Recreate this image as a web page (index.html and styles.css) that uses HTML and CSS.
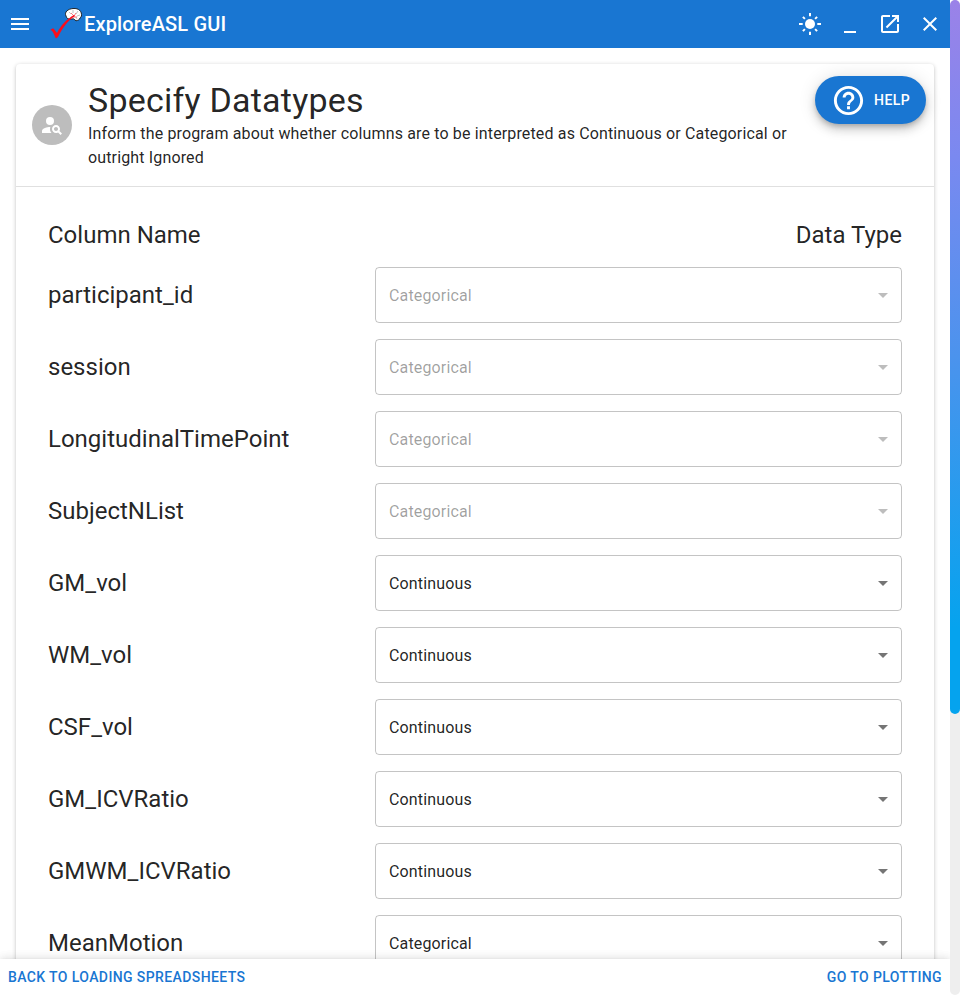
FILE: index.html
```html
<!DOCTYPE html>
<html lang="en">
<head>
<meta charset="utf-8">
<title>ExploreASL GUI</title>
<link rel="stylesheet" href="styles.css">
</head>
<body>
<div class="app">
  <header class="appbar">
    <svg class="icon" viewBox="0 0 24 24"><path d="M3 18h18v-2H3v2zm0-5h18v-2H3v2zm0-7v2h18V6H3z"/></svg>
    <svg class="logo" viewBox="0 0 36 36">
      <path d="M17 10C15 6 19 3 24 2.500c6-.5 9 3 8.500 7.500-.5 1-1 1.500-1.500 2 0 1.500-2 2.500-4 2.800l-2.500-2-2 .2c-3 .5-5-.5-5.500-3z" fill="#fff" stroke="#161616" stroke-width=".9"/>
      <path d="M20 6l2 2M24 4l0 3M29 5l-2 3M31 9l-3 1M28 13l-1-2" stroke="#aaa" stroke-width=".7" fill="none"/>
      <path d="M22 7l3 3 2-3M24 11l4 0" stroke="#f0444c" stroke-width=".7" fill="none"/>
      <path d="M1 24c2-1 3-2 4-1l3 4C12 19 18 13 25 9l1 1C18 15 13 23 9 31l-2 1.500C5 29 4 24 1 24z" fill="#fb0d1b"/>
    </svg>
    <h1 class="brand">ExploreASL GUI</h1>
    <div class="window-actions">
      <svg class="icon" viewBox="0 0 24 24"><circle cx="12" cy="12" r="5"/><path d="M12 1v3.300M12 19.700v3.300M1 12h3.700M19.300 12h3.700M4.900 4.900l2 2M17.100 17.100l2 2M4.900 19.100l2-2M17.100 6.900l2-2" stroke="currentColor" stroke-width="2"/></svg>
      <svg class="icon" viewBox="0 0 24 24"><path d="M6 19h12v2H6z"/></svg>
      <svg class="icon" viewBox="0 0 24 24"><path d="M19 19H5V5h7V3H5c-1.11 0-2 .9-2 2v14c0 1.1.89 2 2 2h14c1.1 0 2-.9 2-2v-7h-2v7zM14 3v2h3.59l-9.83 9.83 1.41 1.41L19 6.41V10h2V3h-7z"/></svg>
      <svg class="icon" viewBox="0 0 24 24"><path d="M19 6.41L17.59 5 12 10.59 6.41 5 5 6.41 10.59 12 5 17.59 6.41 19 12 13.41 17.59 19 19 17.59 13.41 12z"/></svg>
    </div>
  </header>

  <main class="content">
    <section class="card">
      <div class="card-header">
        <div class="avatar"><svg viewBox="0 0 24 24"><circle cx="10" cy="8" r="4"/><path d="M10.35 14.01C7.62 13.91 2 15.27 2 18v2h9.54c-2.47-2.76-1.23-5.89-1.19-5.99zM19.43 18.02c.36-.59.57-1.28.57-2.02 0-2.21-1.79-4-4-4s-4 1.79-4 4 1.79 4 4 4c.74 0 1.43-.22 2.02-.57L20.59 22 22 20.59l-2.57-2.57zM16 18c-1.1 0-2-.9-2-2s.9-2 2-2 2 .9 2 2-.9 2-2 2z"/></svg></div>
        <div class="heading">
          <h2 class="title">Specify Datatypes</h2>
          <p class="subtitle">Inform the program about whether columns are to be interpreted as Continuous or Categorical or outright Ignored</p>
        </div>
        <button class="help"><svg viewBox="0 0 24 24"><path d="M11 18h2v-2h-2v2zm1-16C6.48 2 2 6.48 2 12s4.48 10 10 10 10-4.48 10-10S17.52 2 12 2zm0 18c-4.41 0-8-3.59-8-8s3.59-8 8-8 8 3.59 8 8-3.59 8-8 8zm0-14c-2.21 0-4 1.79-4 4h2c0-1.1.9-2 2-2s2 .9 2 2c0 2-3 1.75-3 5h2c0-2.25 3-2.5 3-5 0-2.21-1.79-4-4-4z"/></svg>Help</button>
      </div>
      <div class="card-body">
        <div class="columns"><span>Column Name</span><span>Data Type</span></div>
        <div class="row"><span>participant_id</span><div class="select disabled"><span>Categorical</span><svg viewBox="0 0 24 24"><path d="M7 10l5 5 5-5z"/></svg></div></div>
        <div class="row"><span>session</span><div class="select disabled"><span>Categorical</span><svg viewBox="0 0 24 24"><path d="M7 10l5 5 5-5z"/></svg></div></div>
        <div class="row"><span>LongitudinalTimePoint</span><div class="select disabled"><span>Categorical</span><svg viewBox="0 0 24 24"><path d="M7 10l5 5 5-5z"/></svg></div></div>
        <div class="row"><span>SubjectNList</span><div class="select disabled"><span>Categorical</span><svg viewBox="0 0 24 24"><path d="M7 10l5 5 5-5z"/></svg></div></div>
        <div class="row"><span>GM_vol</span><div class="select"><span>Continuous</span><svg viewBox="0 0 24 24"><path d="M7 10l5 5 5-5z"/></svg></div></div>
        <div class="row"><span>WM_vol</span><div class="select"><span>Continuous</span><svg viewBox="0 0 24 24"><path d="M7 10l5 5 5-5z"/></svg></div></div>
        <div class="row"><span>CSF_vol</span><div class="select"><span>Continuous</span><svg viewBox="0 0 24 24"><path d="M7 10l5 5 5-5z"/></svg></div></div>
        <div class="row"><span>GM_ICVRatio</span><div class="select"><span>Continuous</span><svg viewBox="0 0 24 24"><path d="M7 10l5 5 5-5z"/></svg></div></div>
        <div class="row"><span>GMWM_ICVRatio</span><div class="select"><span>Continuous</span><svg viewBox="0 0 24 24"><path d="M7 10l5 5 5-5z"/></svg></div></div>
        <div class="row"><span>MeanMotion</span><div class="select"><span>Categorical</span><svg viewBox="0 0 24 24"><path d="M7 10l5 5 5-5z"/></svg></div></div>
      </div>
    </section>
  </main>

  <footer class="footer"><button>Back to Loading Spreadsheets</button><button>Go to Plotting</button></footer>
</div>
<div class="scrollbar"><div class="thumb"></div></div>
</body>
</html>
```
FILE: styles.css
```css
* { box-sizing: border-box; }
body {
  margin: 0;
  height: 995px;
  display: flex;
  overflow: hidden;
  background: #fff;
  color: rgba(0, 0, 0, 0.87);
  font: 400 16px/24px Roboto, sans-serif;
  letter-spacing: 0.009em;
}
h1, h2, p { margin: 0; }
svg { display: block; flex: none; fill: currentColor; }
button { border: 0; font: 500 14px/24px Roboto, sans-serif; letter-spacing: 0.028em; text-transform: uppercase; }

.app { width: 950px; height: 995px; display: flex; flex-direction: column; overflow: hidden; }
.appbar { height: 48px; flex: none; display: flex; align-items: center; padding: 0 8px; background: #1976d2; color: #fff; }
.icon { width: 24px; height: 24px; }
.logo { width: 36px; height: 36px; margin-left: 17px; }
.brand { margin-left: -1px; font-size: 20px; line-height: 32px; font-weight: 500; letter-spacing: 0.0075em; }
.window-actions { margin-left: auto; display: flex; gap: 16px; }

.content { flex: 1; min-height: 0; overflow: hidden; padding: 16px; }
.card { border-radius: 4px; box-shadow: 0 2px 1px -1px rgba(0,0,0,.2), 0 1px 1px rgba(0,0,0,.14), 0 1px 4px rgba(0,0,0,.22); height: 1000px; }
.card-header { display: flex; align-items: center; padding: 16px; height: 122px; }
.avatar { width: 40px; height: 40px; margin-right: 16px; flex: none; border-radius: 50%; background: #bdbdbd; color: #fff; display: flex; align-items: center; justify-content: center; }
.avatar svg { width: 24px; height: 24px; }
.heading { flex: 1; }
.title { padding-bottom: 2px; font-size: 34px; line-height: 40px; font-weight: 400; letter-spacing: 0.0065em; }
.help { align-self: flex-start; margin: -4px -8px 0 16px; height: 48px; padding: 0 16px; display: flex; align-items: center; gap: 8px; border-radius: 24px; background: #1976d2; color: #fff; box-shadow: 0 3px 5px -1px rgba(0,0,0,.2), 0 6px 10px rgba(0,0,0,.14), 0 1px 18px rgba(0,0,0,.12); }
.help svg { width: 35px; height: 35px; }

.card-body { border-top: 1px solid rgba(0, 0, 0, .12); padding: 32px; display: flex; flex-direction: column; gap: 16px; font-size: 24px; line-height: 32px; letter-spacing: 0; }
.columns { display: flex; justify-content: space-between; }
.row { display: flex; justify-content: space-between; align-items: center; }
.select { width: 527px; height: 56px; padding: 0 6px 0 13px; display: flex; align-items: center; justify-content: space-between; border: 1px solid rgba(0, 0, 0, .23); border-radius: 4px; font-size: 16px; letter-spacing: 0.009em; }
.select span { padding-top: 2px; }
.select svg { width: 24px; height: 24px; color: rgba(0, 0, 0, .54); }
.select.disabled { color: rgba(0, 0, 0, .38); }
.select.disabled svg { color: rgba(0, 0, 0, .26); }

.footer { position: relative; height: 36px; flex: none; display: flex; justify-content: space-between; align-items: center; padding: 0 8px; background: #fff; box-shadow: 0 2px 4px -1px rgba(0,0,0,.2), 0 4px 5px rgba(0,0,0,.14), 0 1px 10px rgba(0,0,0,.12), 0 -1px 10px rgba(0,0,0,.06); }
.footer button { padding: 0; background: none; color: #1976d2; }

.scrollbar { width: 10px; height: 995px; border-radius: 5px; background: #eee; }
.thumb { height: 714px; border-radius: 5px; background: linear-gradient(#9b82e8, #7a89f0 22%, #4b93ed 50%, #05a3ee 88%); }
```
